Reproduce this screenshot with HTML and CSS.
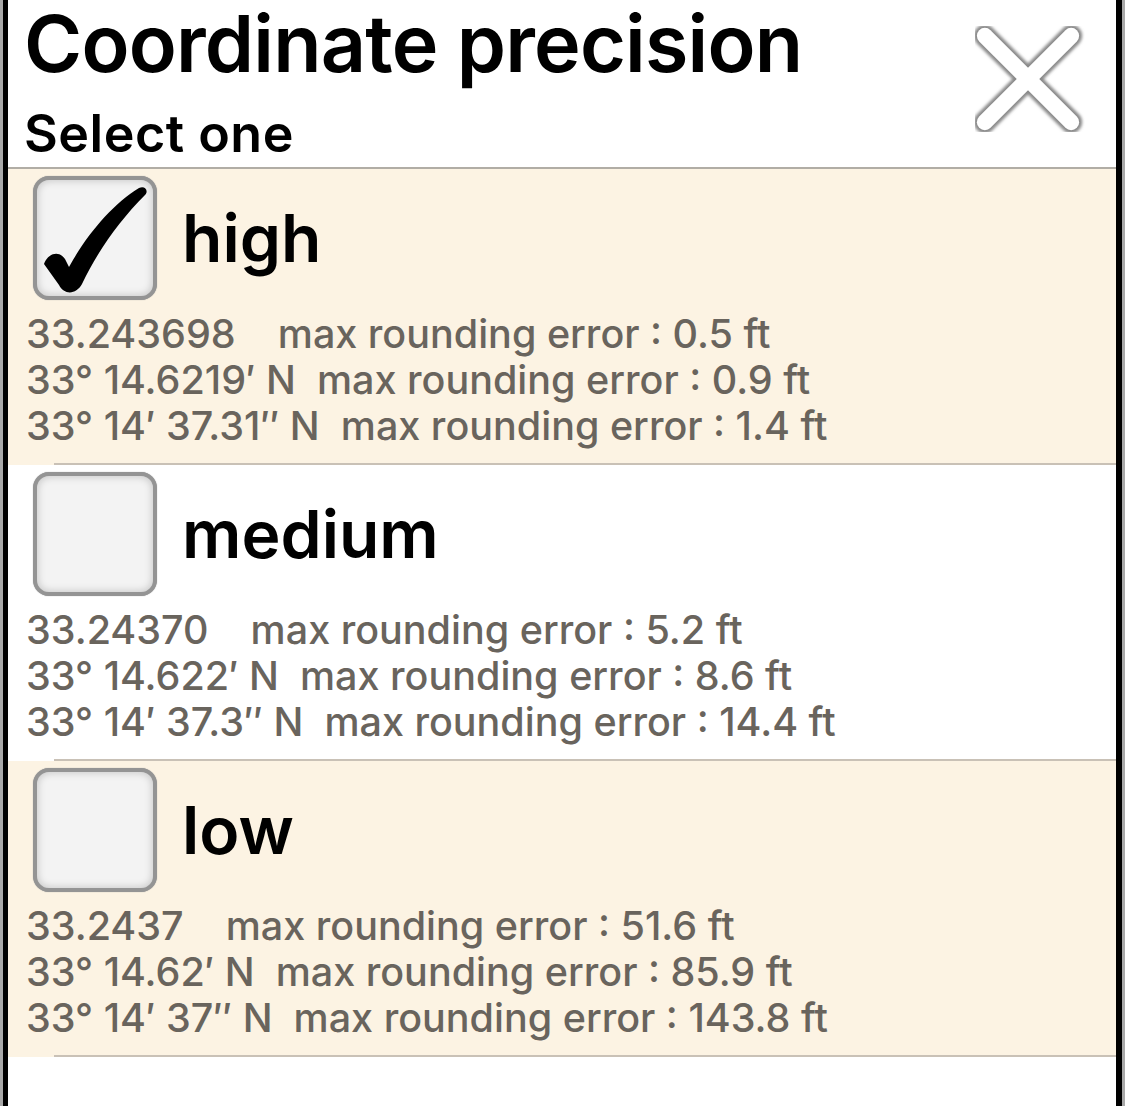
FILE: index.html
```html
<!DOCTYPE html>
<html>
<head>
  <title>Coordinate precision</title>
<link rel="stylesheet" href="styles.css">
</head>
<body>
  <div class="screen">
    <div class="header">
      <div class="titles">
        <h1>Coordinate precision</h1>
        <h2>Select one</h2>
      </div>
      <div class="close-button">
        <svg width="110" height="106" viewBox="0 0 110 106">
          <defs>
            <filter id="soft" x="-20%" y="-20%" width="140%" height="140%">
              <feGaussianBlur stdDeviation="1.4"/>
            </filter>
          </defs>
          <g transform="translate(53 53)">
            <g filter="url(#soft)" fill="none" stroke="#888888" stroke-width="6">
              <rect x="-69" y="-8" width="138" height="16" rx="8" transform="rotate(45)"/>
              <rect x="-69" y="-8" width="138" height="16" rx="8" transform="rotate(-45)"/>
            </g>
            <g fill="#ffffff">
              <rect x="-69" y="-8" width="138" height="16" rx="8" transform="rotate(45)"/>
              <rect x="-69" y="-8" width="138" height="16" rx="8" transform="rotate(-45)"/>
            </g>
          </g>
        </svg>
      </div>
    </div>

    <div class="option selected">
      <div class="option-head">
        <div class="checkbox">
          <svg width="116" height="116" viewBox="0 0 116 116">
            <path d="M7 84 C11 73 22 70 28 79 L32 87 C50 54 76 24 102 8 C108 5 112 11 108 15 C83 40 60 72 45 104 C39 115 27 115 22 105 Z" fill="#000"/>
          </svg>
        </div>
        <div class="label">high</div>
      </div>
      <div class="details">
        <div class="line">33.243698    max rounding error : 0.5 ft</div>
        <div class="line">33° 14.6219′ N  max rounding error : 0.9 ft</div>
        <div class="line">33° 14′ 37.31″ N  max rounding error : 1.4 ft</div>
      </div>
      <div class="separator"></div>
    </div>

    <div class="option">
      <div class="option-head">
        <div class="checkbox"></div>
        <div class="label">medium</div>
      </div>
      <div class="details">
        <div class="line">33.24370    max rounding error : 5.2 ft</div>
        <div class="line">33° 14.622′ N  max rounding error : 8.6 ft</div>
        <div class="line">33° 14′ 37.3″ N  max rounding error : 14.4 ft</div>
      </div>
      <div class="separator"></div>
    </div>

    <div class="option selected">
      <div class="option-head">
        <div class="checkbox"></div>
        <div class="label">low</div>
      </div>
      <div class="details">
        <div class="line">33.2437    max rounding error : 51.6 ft</div>
        <div class="line">33° 14.62′ N  max rounding error : 85.9 ft</div>
        <div class="line">33° 14′ 37″ N  max rounding error : 143.8 ft</div>
      </div>
      <div class="separator"></div>
    </div>
  </div>
</body>
</html>
```

FILE: styles.css
```css
* {
  margin: 0;
  padding: 0;
  box-sizing: border-box;
}

body {
  font-family: Inter, "Noto Sans", sans-serif;
  background-color: #a9a9a9;
  color: #000000;
  overflow: hidden;
}

.screen {
  margin: 0 3px;
  border-left: 5px solid #000000;
  border-right: 6px solid #000000;
  background-color: #ffffff;
  min-height: 1106px;
}

.header {
  display: flex;
  justify-content: space-between;
  height: 169px;
  padding-left: 16px;
  border-bottom: 2px solid #b1ada5;
}

.header h1 {
  font-size: 79px;
  font-weight: 600;
  line-height: 86px;
  letter-spacing: -0.8px;
}

.header h2 {
  margin-top: 16px;
  font-size: 52px;
  font-weight: 600;
  line-height: 64px;
  letter-spacing: 0.5px;
}

.close-button {
  padding: 26px 31px 0 0;
}

.option {
  background-color: #ffffff;
}

.option.selected {
  background-color: #fcf3e3;
}

.option-head {
  display: flex;
  align-items: center;
  padding: 7px 0 0 25px;
}

.checkbox {
  width: 124px;
  height: 124px;
  border: 4px solid #949494;
  border-radius: 16px;
  background-color: #f3f3f3;
  box-shadow: inset 0 0 8px rgba(0, 0, 0, 0.22), 0 0 1px #949494;
}

.label {
  margin-left: 25px;
  font-size: 66px;
  font-weight: 600;
}

.details {
  padding: 11px 0 14px 18px;
}

.line {
  font-size: 39.5px;
  font-weight: 500;
  line-height: 46px;
  color: #69645d;
  white-space: pre;
}

.separator {
  margin-left: 46px;
  height: 2px;
  background-color: #c9c1b6;
}
```
